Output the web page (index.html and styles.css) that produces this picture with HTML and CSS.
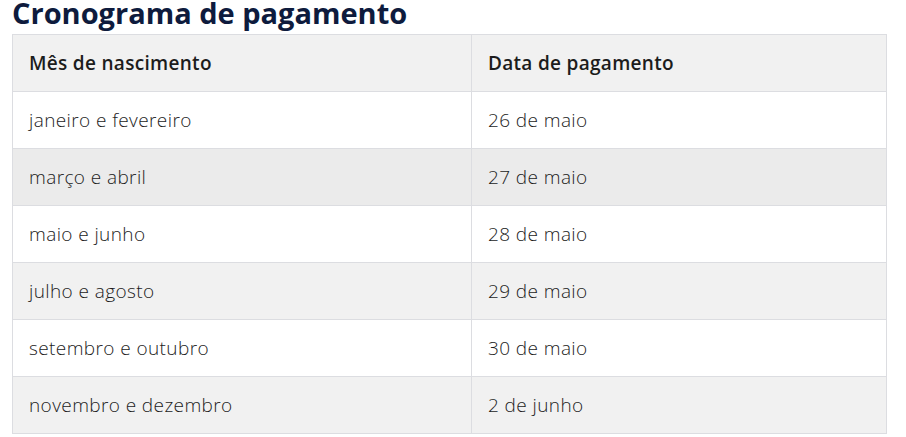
FILE: index.html
```html
<!DOCTYPE html>
<html lang="pt-BR">
<head>
<meta charset="utf-8">
<title>Cronograma de pagamento</title>
<link rel="stylesheet" href="styles.css">
</head>
<body>
<main class="page">
  <h2 class="title">Cronograma de pagamento</h2>
  <table class="schedule">
    <thead>
      <tr><th class="col-a">Mês de nascimento</th><th class="col-b">Data de pagamento</th></tr>
    </thead>
    <tbody>
      <tr><td>janeiro e fevereiro</td><td>26 de maio</td></tr>
      <tr class="hover"><td>março e abril</td><td>27 de maio</td></tr>
      <tr><td>maio e junho</td><td>28 de maio</td></tr>
      <tr><td>julho e agosto</td><td>29 de maio</td></tr>
      <tr><td>setembro e outubro</td><td>30 de maio</td></tr>
      <tr><td>novembro e dezembro</td><td>2 de junho</td></tr>
    </tbody>
  </table>
</main>
</body>
</html>
```
FILE: styles.css
```css
html, body { margin: 0; padding: 0; background: #fff; }
.page { padding: 0 12px; font-family: "Open Sans", "Liberation Sans", sans-serif; }
.title {
  margin: 0 0 9px;
  font-size: 29px;
  line-height: 25px;
  font-weight: 700;
  color: #0e1b3d;
}
.schedule {
  width: 875px;
  border-collapse: collapse;
  table-layout: fixed;
  font-size: 19px;
  color: #1c1c1c;
}
.schedule th, .schedule td {
  border: 1px solid #dcdde1;
  height: 56px;
  padding: 0 16px;
  text-align: left;
  vertical-align: middle;
}
.col-a { width: 426px; }
.schedule th { font-weight: 600; background: #f1f1f1; letter-spacing: 0.3px; }
.schedule td { font-weight: 300; letter-spacing: 0.4px; }
.schedule tbody tr:nth-child(even) { background: #f1f1f1; }
.schedule tbody tr.hover { background: #ebebeb; }
```
